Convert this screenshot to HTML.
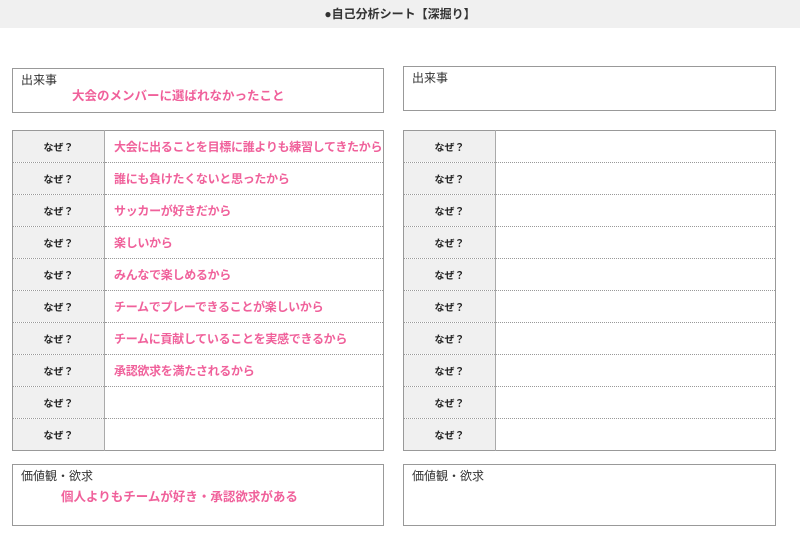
<!DOCTYPE html>
<html><head><meta charset="utf-8"><style>
*{margin:0;padding:0;box-sizing:border-box}
body{width:800px;height:554px;background:#fff;position:relative;font-family:"Liberation Sans","Noto Sans CJK JP",sans-serif;color:#333;overflow:hidden}
.hd{position:absolute;left:0;top:0;width:800px;height:28px;background:#f0f0f0;text-align:center;font-size:12px;font-weight:bold;line-height:28px}
.box{position:absolute;border:1.5px solid #999;background:#fff}
.lbl{position:absolute;left:8px;top:2px;font-size:12px;color:#333}
.pk{color:#f0619b;font-weight:bold;font-size:12.5px;position:absolute;white-space:nowrap}
table{position:absolute;border-collapse:collapse;border:1.5px solid #999;table-layout:fixed}
td{height:32px;border-top:1px dotted #999;font-size:12px;white-space:nowrap;overflow:hidden}
tr:first-child td{border-top:none}
td.n{width:92px;background:#f0f0f0;border-right:1px solid #aaa;text-align:center;font-size:10px;font-weight:bold;color:#222}
td.v{color:#f0619b;font-weight:bold;padding-left:9px;font-size:12px;letter-spacing:-0.3px}
</style></head><body>
<div class="hd">●自己分析シート【深掘り】</div>
<div class="box" style="left:12px;top:68px;width:372px;height:45px"><div class="lbl">出来事</div><div class="pk" style="left:59px;top:16px">大会のメンバーに選ばれなかったこと</div></div>
<div class="box" style="left:403px;top:66px;width:373px;height:45px"><div class="lbl">出来事</div></div>
<table style="left:12px;top:130px;width:372px">
<tr><td class="n">なぜ？</td><td class="v">大会に出ることを目標に誰よりも練習してきたから</td></tr>
<tr><td class="n">なぜ？</td><td class="v">誰にも負けたくないと思ったから</td></tr>
<tr><td class="n">なぜ？</td><td class="v">サッカーが好きだから</td></tr>
<tr><td class="n">なぜ？</td><td class="v">楽しいから</td></tr>
<tr><td class="n">なぜ？</td><td class="v">みんなで楽しめるから</td></tr>
<tr><td class="n">なぜ？</td><td class="v">チームでプレーできることが楽しいから</td></tr>
<tr><td class="n">なぜ？</td><td class="v">チームに貢献していることを実感できるから</td></tr>
<tr><td class="n">なぜ？</td><td class="v">承認欲求を満たされるから</td></tr>
<tr><td class="n">なぜ？</td><td class="v"></td></tr>
<tr><td class="n">なぜ？</td><td class="v"></td></tr>
</table>
<table style="left:403px;top:130px;width:373px">
<tr><td class="n">なぜ？</td><td class="v"></td></tr>
<tr><td class="n">なぜ？</td><td class="v"></td></tr>
<tr><td class="n">なぜ？</td><td class="v"></td></tr>
<tr><td class="n">なぜ？</td><td class="v"></td></tr>
<tr><td class="n">なぜ？</td><td class="v"></td></tr>
<tr><td class="n">なぜ？</td><td class="v"></td></tr>
<tr><td class="n">なぜ？</td><td class="v"></td></tr>
<tr><td class="n">なぜ？</td><td class="v"></td></tr>
<tr><td class="n">なぜ？</td><td class="v"></td></tr>
<tr><td class="n">なぜ？</td><td class="v"></td></tr>
</table>
<div class="box" style="left:12px;top:464px;width:372px;height:62px"><div class="lbl">価値観・欲求</div><div class="pk" style="left:48px;top:21px">個人よりもチームが好き・承認欲求がある</div></div>
<div class="box" style="left:403px;top:464px;width:373px;height:62px"><div class="lbl">価値観・欲求</div></div>
</body></html>
